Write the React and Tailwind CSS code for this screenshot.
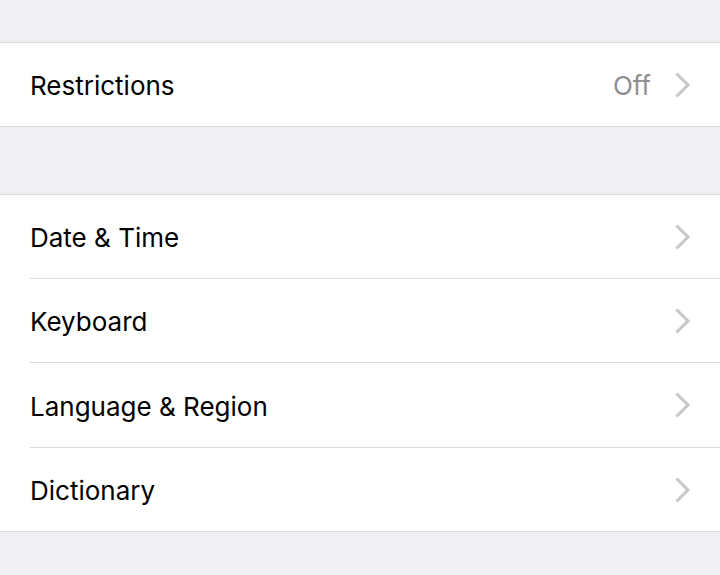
import React from "react";

const Chevron = () => (
  <svg width="16" height="26" viewBox="0 0 16 26" className="shrink-0">
    <path d="M2.5 2.5 L13 13 L2.5 23.5" fill="none" stroke="#c7c7cc" strokeWidth="3" strokeLinecap="square" strokeLinejoin="miter" />
  </svg>
);

const Row = ({ label, value, last, h }) => (
  <div className={`flex ${h} items-stretch pl-[30px]`}>
    <div className={`flex flex-1 items-center pr-[29px] ${last ? "" : "border-b border-[#dcdcdf]"}`}>
      <span className="flex-1 pt-[2px] text-[26px] text-black">{label}</span>
      {value && <span className="mr-[24px] pt-[2px] text-[26px] text-[#8e8e93]">{value}</span>}
      <Chevron />
    </div>
  </div>
);

export default function App() {
  return (
    <div className="h-[575px] w-[720px] overflow-hidden bg-[#efeff4]" style={{ fontFamily: "Inter, 'Liberation Sans', sans-serif" }}>
      <div className="h-[42px]" />
      <div className="border-y border-[#dcdcdf] bg-white">
        <Row label="Restrictions" value="Off" last h="h-[83px]" />
      </div>
      <div className="h-[67px]" />
      <div className="border-y border-[#dcdcdf] bg-white">
        <Row label="Date & Time" h="h-[84px]" />
        <Row label="Keyboard" h="h-[84px]" />
        <Row label="Language & Region" h="h-[85px]" />
        <Row label="Dictionary" last h="h-[83px]" />
      </div>
    </div>
  );
}
